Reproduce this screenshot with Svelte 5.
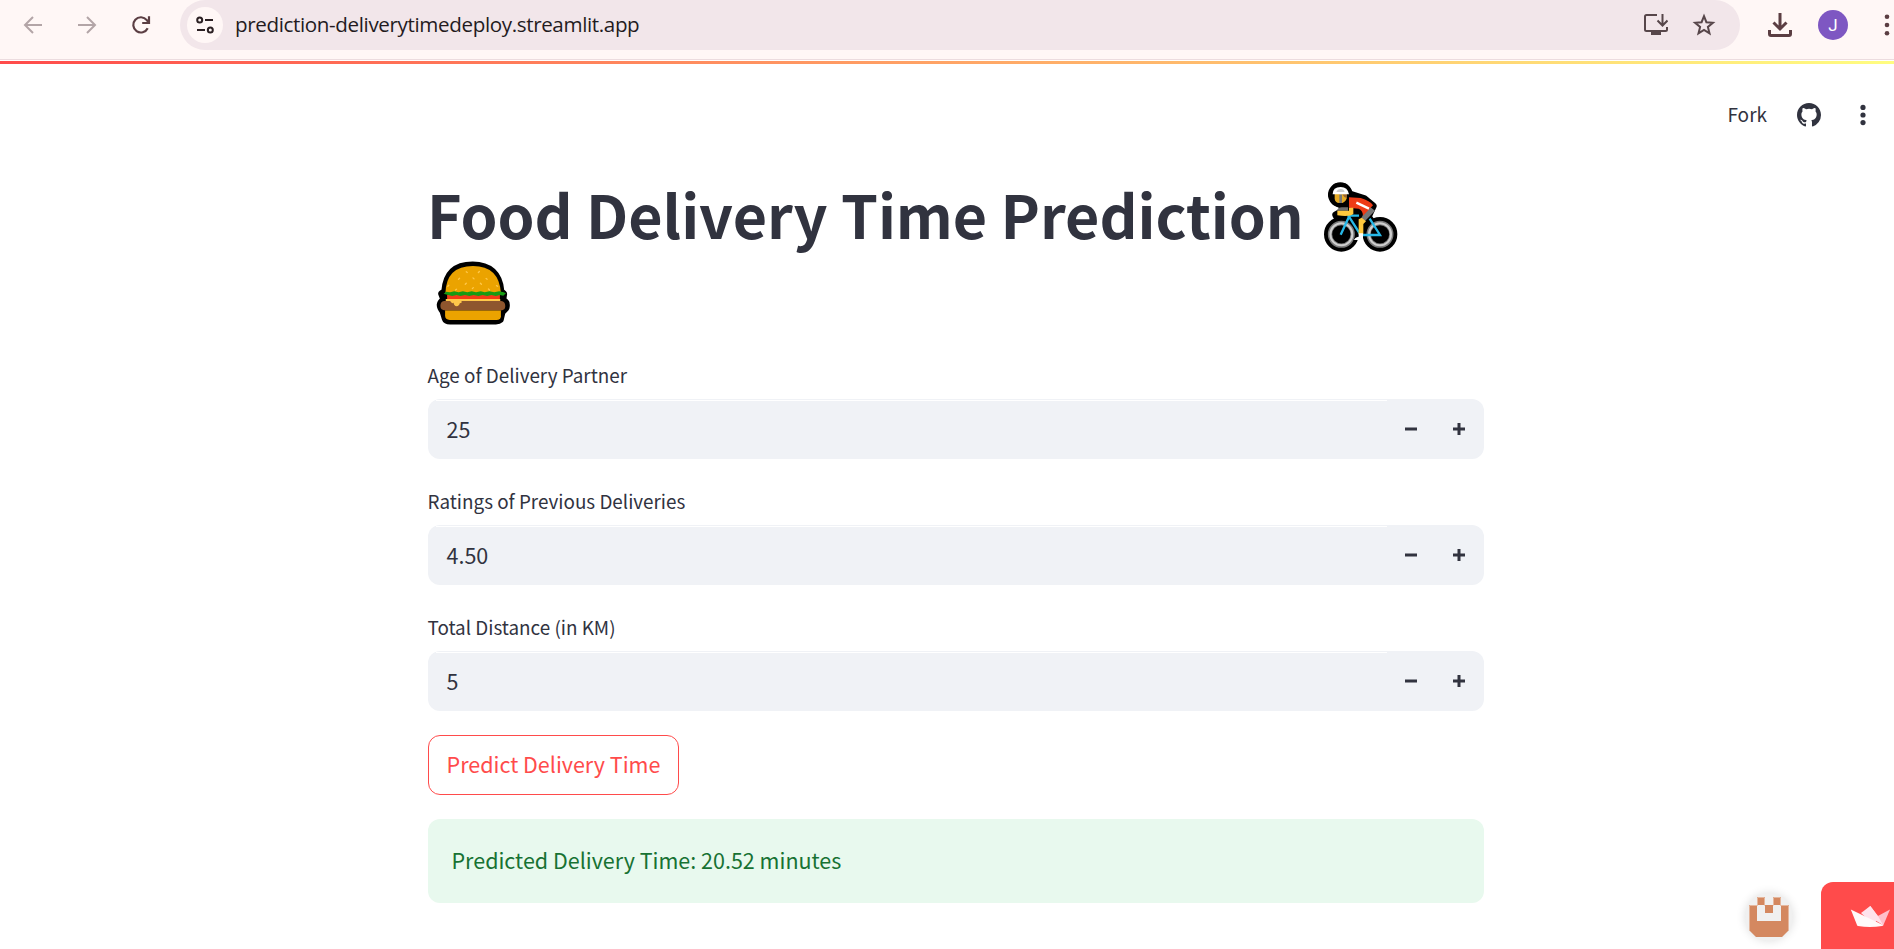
<script>
  let fields = $state([
    { label: 'Age of Delivery Partner', value: 25, step: 1, digits: 0 },
    { label: 'Ratings of Previous Deliveries', value: 4.5, step: 0.1, digits: 2 },
    { label: 'Total Distance (in KM)', value: 5, step: 1, digits: 0 }
  ]);
</script>

<div class="page">
  <header class="browser">
    <div class="nav">
      <svg width="24" height="24" viewBox="0 0 24 24" fill="none" stroke="#b3a5a7" stroke-width="2"><path d="M21 12H4M12 4l-8 8 8 8" /></svg>
      <svg width="24" height="24" viewBox="0 0 24 24" fill="none" stroke="#b3a5a7" stroke-width="2"><path d="M3 12h17M12 4l8 8-8 8" /></svg>
      <svg width="24" height="24" viewBox="0 0 24 24" fill="none" stroke="#5b3e43" stroke-width="2.2"><path d="M18.7 15.2A7.6 7.6 0 1 1 17.8 7.1L19.5 9.2M20 3.3V10H13.2" /></svg>
    </div>
    <div class="address">
      <span class="tune">
        <svg width="20" height="20" viewBox="0 0 20 20" fill="none" stroke="#2b2023" stroke-width="2"><circle cx="4.7" cy="5" r="2.5" /><path d="M10 5h8M2 15h8" /><circle cx="15.3" cy="15" r="2.5" /></svg>
      </span>
      <span class="url">prediction-deliverytimedeploy.streamlit.app</span>
      <svg class="install" width="24" height="22" viewBox="0 0 24 22" fill="none" stroke="#57464a" stroke-width="2"><path d="M13 1H2.5Q1 1 1 2.500V15.500Q1 17 2.500 17H21.500Q23 17 23 15.500V13M18.500 0v11M13.500 6.500l5 5 5-5" /><path d="M8 17h8v3H8z" fill="#57464a" /></svg>
      <svg class="star" width="24" height="24" viewBox="0 0 24 24" fill="none" stroke="#57464a" stroke-width="2"><path d="M12 3.200l2.400 6 6.500.5-5 4.200 1.600 6.500-5.500-3.500-5.500 3.500 1.600-6.500-5-4.200 6.500-.5z" /></svg>
    </div>
    <svg class="download" width="24" height="24" viewBox="0 0 24 24" fill="none" stroke="#5b3e43" stroke-width="3"><path d="M12 0v16M5.500 9.500L12 16l6.500-6.500M1.500 17v4q0 1.500 1.500 1.500h18q1.500 0 1.500-1.500v-4" /></svg>
    <span class="profile">J</span>
    <svg class="kebab" width="6" height="24" viewBox="0 0 6 24" fill="#5b3e43"><circle cx="3" cy="3.700" r="2.300" /><circle cx="3" cy="12" r="2.300" /><circle cx="3" cy="20.300" r="2.300" /></svg>
  </header>
  <div class="rainbow"></div>

  <div class="toolbar">
    <span class="fork">Fork</span>
    <svg width="24" height="24" viewBox="0 0 16 16" fill="#31333f"><path d="M8 0C3.580 0 0 3.580 0 8c0 3.540 2.290 6.530 5.470 7.590.4.070.55-.17.55-.38 0-.19-.01-.82-.01-1.490-2.010.37-2.530-.49-2.690-.94-.09-.23-.48-.94-.82-1.130-.28-.15-.68-.52-.01-.53.63-.01 1.080.58 1.230.82.72 1.210 1.870.87 2.330.66.07-.52.28-.87.51-1.070-1.780-.2-3.640-.89-3.640-3.950 0-.87.31-1.590.82-2.150-.08-.2-.36-1.020.08-2.120 0 0 .67-.21 2.200.82a7.600 7.600 0 0 1 4 0c1.530-1.040 2.200-.82 2.200-.82.44 1.100.16 1.920.08 2.120.51.56.82 1.270.82 2.150 0 3.070-1.870 3.750-3.650 3.950.29.25.54.73.54 1.480 0 1.070-.01 1.930-.01 2.200 0 .21.15.46.55.38A8.010 8.010 0 0 0 16 8c0-4.420-3.580-8-8-8z" /></svg>
    <svg class="more" width="6" height="22" viewBox="0 0 6 22" fill="#31333f"><circle cx="3" cy="3.400" r="2.600" /><circle cx="3" cy="11" r="2.600" /><circle cx="3" cy="18.600" r="2.600" /></svg>
  </div>

  <main>
    <h1>
      <span class="line">
        <span class="title">Food Delivery Time Prediction</span>
        <svg class="bike" width="80" height="74" viewBox="66 30 240 222">
          <g fill="#000" stroke="#000" stroke-width="22" stroke-linejoin="round">
            <circle cx="127" cy="193" r="41" /><circle cx="243" cy="193" r="41" /><circle cx="124" cy="74" r="26" />
            <path d="M98 74l14-23h24l14 21 45 14 27 22-15 32 24 35-45 20-35 3-28-43-12-20 35-20-38-20z" />
          </g>
          <g fill="#000" stroke="#7b7b7b" stroke-width="13"><circle cx="127" cy="193" r="34" /><circle cx="243" cy="193" r="34" /></g>
          <g fill="none" stroke="#cfcfcf" stroke-width="6"><circle cx="127" cy="193" r="33" /><circle cx="243" cy="193" r="33" /></g>
          <path d="M114 122q3-10 14-10h19v10z" fill="#6d6d6d" />
          <path d="M207 106l21 16-32 33-10-9z" fill="#767676" />
          <path d="M125 194l25-54 35 55h58l-31-49M145 137h35" fill="none" stroke="#27b8e8" stroke-width="7" />
          <path d="M179 148l9-5 13 11-8 8v31h-14z" fill="#ffc83d" />
          <path d="M179 190h13v20h-27q2-8 14-10z" fill="#fff" />
          <path d="M150 82l35 2q28 8 37 22l-30 31q-1-16-13-21l-29-3z" fill="#ee3b16" />
          <path d="M172 98l38 18" stroke="#fff" stroke-width="7" />
          <path d="M150 113h13v19q-10 9-48 4v-14h35z" fill="#ffc83d" />
          <path d="M107 71h36v15q-7 15-22 13-13-1-14-13z" fill="#e5aa25" />
          <path d="M130 73h13v11q-8-1-13-11" fill="#986330" /><path d="M121 73h8v26h-8z" fill="#777" />
          <path d="M101 73q0-22 24-22 21 0 25 22z" fill="#fff" /><path d="M112 66q3-9 13-9t12 9z" fill="#ccc" />
        </svg>
      </span>
      <span class="line second">
        <svg class="burger" width="76" height="66" viewBox="46 30 226 196">
          <path d="M75 124C79 70 108 45 158 45s80 26 84 79l8 7-3 19q14 4 10 22l-12 13-5 22q-4 4-13 4H91q-12 0-14-6l-7-23q-18-22 3-34l-7-18z" fill="#000" stroke="#000" stroke-width="21" stroke-linejoin="round" />
          <path d="M77 129q2-81 82-81 78 0 83 81z" fill="#eba300" />
          <g stroke="#ffc84a" stroke-width="4" stroke-linecap="round"><path d="M139 65l3 2M178 64l-3 3M119 84l-3 3M159 83l3 3M198 85l3 2M139 99l-3 3M181 99l3 3M87 105l-3 3M160 112l-3 3M107 119l3-2M208 119l-3-3M229 106l3 2" /></g>
          <path d="M82 133h157v14H82z" fill="#f23b16" />
          <path d="M72 130l7-6 12 2 12-3 13 3 13-3 13 3 13-3 13 3 14-3 12 3 14-3 14 3 15-3 13 3 7 3-8 7-10-2-12 3-13-3-13 3-13-3-13 3-14-3-13 3-13-3-13 3-12-3-13 3-12-3z" fill="#159b13" />
          <path d="M78 146h162v7H78z" fill="#ffc84a" />
          <path d="M73 152h170q12 1 12 15 0 13-13 13H77q-15 0-15-13t11-15z" fill="#8e562e" />
          <path d="M88 149h37v8q-7 0-7 6-8 9-15 0l-2-6q-5 3-6-1z" fill="#ffc84a" />
          <path d="M76 180h166v17q0 11-13 11H90q-14 0-14-12z" fill="#eba300" />
        </svg>
      </span>
    </h1>

    {#each fields as field}
      <section class="field">
        <div class="label">{field.label}</div>
        <div class="number">
          <span class="value">{field.value.toFixed(field.digits)}</span>
          <button class="step" aria-label="Decrease" onclick={() => (field.value -= field.step)}>
            <svg width="12" height="12" viewBox="0 0 12 12"><path d="M0 6h12" stroke="#31333f" stroke-width="3" /></svg>
          </button>
          <button class="step" aria-label="Increase" onclick={() => (field.value += field.step)}>
            <svg width="12" height="12" viewBox="0 0 12 12"><path d="M0 6h12M6 0v12" stroke="#31333f" stroke-width="3" /></svg>
          </button>
        </div>
      </section>
    {/each}

    <button class="predict"><span>Predict Delivery Time</span></button>
    <div class="result"><span>Predicted Delivery Time: 20.52 minutes</span></div>
  </main>

  <div class="avatar">
    <svg width="48" height="48" viewBox="0 0 48 48"><path d="M12 4h8v8h8V4h8v8h8v25l-7 7H11l-7-7V12h8z" fill="#d48860" /><path d="M12 12h8v8h8v-8h8v16H12z" fill="#f0f0f0" /><path d="M4.500 37V12.500H12.500V4.500H19.500V12.500M28.500 12.500V4.500H35.500V12.500H43.500V37" fill="none" stroke="#e5b79e" /></svg>
  </div>
  <div class="badge">
    <svg width="40" height="22" viewBox="0 0 40 22"><path d="M20.300 0l8 11-4.300 8-13-12z" fill="#ffe3ec" /><path d="M40 3.500L33 20l-7-9z" fill="#ffbfca" /><path d="M13 7L20.300 0l7.700 10 5 9z" fill="#ffe3ec" /><path d="M.8 3.400L33 19q0 1-1 1-12 2-24 0-.8 0-1-1z" fill="#fffafa" /></svg>
  </div>
</div>

<style>
  :global(body) { margin: 0; overflow: hidden; background: #fff; }
  .page { position: relative; height: 949px; overflow: hidden; color: #31333f; font-family: "Noto Sans CJK SC", "Noto Sans", sans-serif; }
  svg { display: block; flex: none; }
  button { font: inherit; color: inherit; padding: 0; }
  .browser { display: flex; align-items: center; box-sizing: border-box; height: 60px; padding: 0 4px 10px 21px; background: #fff7f6; border-bottom: 1px solid #ecdcdf; }
  .nav { display: flex; gap: 30px; width: 159px; }
  .address { display: flex; align-items: center; box-sizing: border-box; width: 1560px; height: 50px; padding: 0 24px 0 7px; border-radius: 25px; background: #f2e6ea; }
  .tune { display: flex; align-items: center; justify-content: center; width: 36px; height: 36px; border-radius: 50%; background: #fff7f6; }
  .url { margin: -2px 0 0 12px; flex: 1; font: 20.600px/30px "Open Sans", sans-serif; letter-spacing: -0.370px; color: #241b1e; white-space: nowrap; }
  .star { margin-left: 24px; }
  .download { margin-left: 28px; }
  .profile { width: 30px; margin-left: 26px; border-radius: 50%; background: #7e57c2; color: #fff; font: 17px/30px Roboto, sans-serif; text-align: center; }
  .kebab { margin-left: 36px; }
  .rainbow { height: 3px; margin-top: 1px; background: linear-gradient(90deg, #ff4b4b, #fffd80); }
  .toolbar { display: flex; align-items: center; justify-content: flex-end; height: 102px; padding-right: 28px; }
  .fork { margin: -2px 30px 0 0; font-size: 19px; line-height: 28px; }
  .more { margin-left: 39px; }
  main { width: 1056px; margin: 11px 0 0 428px; }
  h1 { margin: 0; height: 178px; font-size: 59.200px; font-weight: 700; line-height: 79px; }
  .line { display: flex; height: 79px; }
  .title { margin: -3px 0 0 -1px; letter-spacing: -0.040px; white-space: nowrap; }
  .bike { margin: 3px 0 0 17px; }
  .burger { margin: 4px 0 0 6.500px; }
  .field { height: 126px; }
  .label { height: 44px; margin-left: -0.500px; font-size: 18.850px; line-height: 40px; }
  .number { position: relative; display: flex; height: 60px; border-radius: 12px; background: #f0f2f6; }
  .number::before { content: ''; position: absolute; left: 8px; right: 97px; top: 1px; height: 1px; background: #fff; }
  .value { flex: 1; padding-left: 18.500px; font-size: 21.500px; line-height: 60px; }
  .step { display: flex; align-items: center; justify-content: center; width: 48px; border: 0; background: none; }
  .step:last-child { margin-right: 1px; }
  .predict { display: block; width: 251px; height: 60px; margin-top: 2px; padding-bottom: 2px; border: 1px solid #ff4b4b; border-radius: 12px; background: #fff; color: #ff4b4b; font-size: 21.500px; line-height: 56px; white-space: nowrap; }
  .result { box-sizing: border-box; height: 84px; margin-top: 24px; padding-left: 23.500px; border-radius: 12px; background: #e8f9ee; color: #177233; font-size: 21.500px; line-height: 81px; }
  .avatar { position: absolute; left: 1745px; top: 893px; width: 48px; height: 48px; border-radius: 50%; background: #f0f0f0; box-shadow: 0 0 10px #0002; }
  .badge { position: absolute; left: 1821px; top: 882px; width: 73px; height: 67px; box-sizing: border-box; padding: 24px 0 0 29px; border-radius: 12px 0 0 0; background: #ff4b4b; }
</style>
